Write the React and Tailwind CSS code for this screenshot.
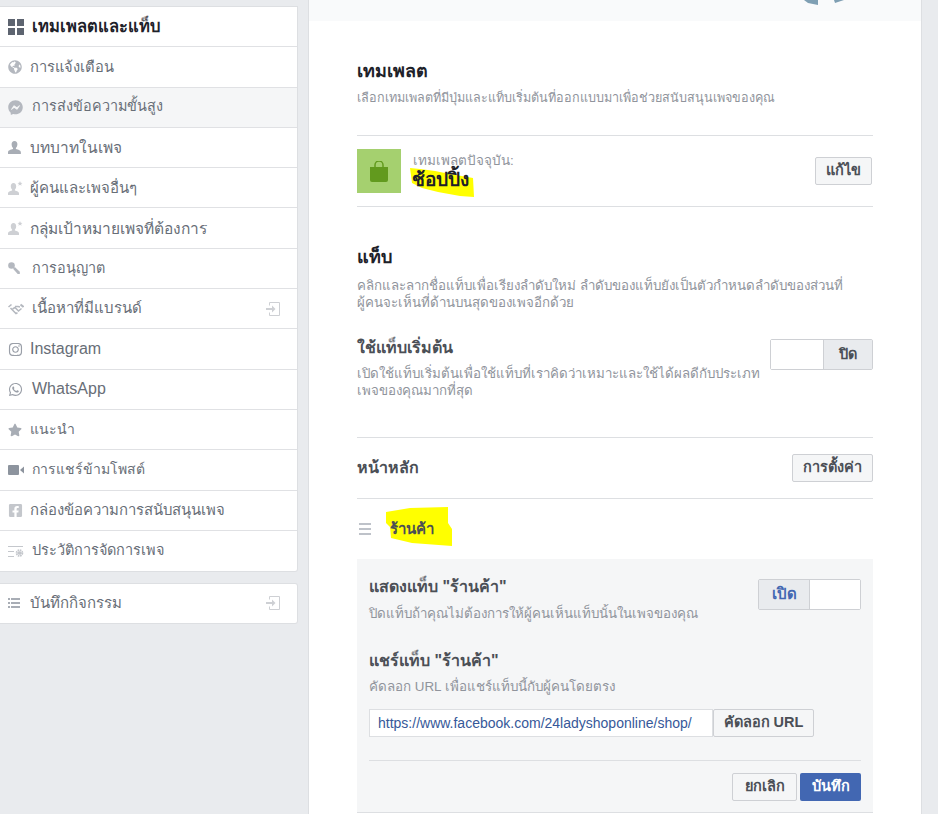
import React from "react";
import { FaFacebookMessenger, FaInstagram, FaWhatsapp, FaStar, FaFacebookSquare, FaGlobeAmericas } from "react-icons/fa";

const FONT = "font-['Liberation_Sans','Noto_Sans','Tahoma',sans-serif]";

const Grid = () => (
  <svg width="16" height="16" viewBox="0 0 16 16" fill="#5d6470"><rect width="7" height="7" /><rect x="9" width="7" height="7" /><rect y="9" width="7" height="7" /><rect x="9" y="9" width="7" height="7" /></svg>
);
const Bust = () => (
  <svg width="13" height="13" viewBox="0 0 13 13" fill="#a8adb5"><path d="M6.500 0c1.900 0 2.900 1.400 2.900 3.300 0 1.500-.7 3-1.500 3.800v1c2.300.7 5 1.300 5 3.400V13H0v-1.500c0-2.100 2.700-2.700 5-3.400v-1C4.200 6.300 3.600 4.800 3.600 3.300 3.600 1.400 4.600 0 6.500 0z" /></svg>
);
const UserStar = () => (
  <svg width="15" height="14" viewBox="0 0 15 14" fill="#ced0d4"><path d="M5.500 2c1.800 0 2.700 1.300 2.700 3.200 0 1.400-.6 2.600-1.300 3.200v1c2 .5 4.100 1.100 4.100 2.900V14H0v-1.700c0-1.800 2.100-2.400 4.100-2.900v-1C3.400 7.800 2.800 6.600 2.800 5.200 2.800 3.300 3.700 2 5.500 2z" /><path d="M12 0l.7 1.800 1.800.1-1.400 1.100.5 1.800-1.600-1-1.600 1 .5-1.800-1.400-1.100 1.800-.1z" /></svg>
);
const Key = () => (
  <svg width="12" height="12" viewBox="0 0 12 12" fill="#b4b8bf"><circle cx="3.500" cy="3.500" r="3.300" /><path d="M5 6.800L6.800 5l5 4.800V12H9.700z" /></svg>
);
const Shake = () => (
  <svg width="16" height="12" viewBox="0 0 16 12" fill="none" stroke="#b4b8bf" strokeWidth="1.500"><path d="M0.500 4L3.500 1.500" /><path d="M15.500 4L12.500 1.500" strokeWidth="2" /><path d="M2.500 5L8 10.500l1.500-.7" /><path d="M13.500 5.500L10.500 8 7 4.500l-2.500 1.500" /><path d="M7 3.500h3l2 .5" /></svg>
);
const GearList = () => (
  <svg width="16" height="13" viewBox="0 0 16 13" fill="none"><path d="M0 1.500h15M0 6.500h6M0 11.500h6" stroke="#c4c7cc" /><circle cx="11.500" cy="8" r="2.800" fill="none" stroke="#c4c7cc" strokeWidth="2" strokeDasharray="1.500 .7" /><circle cx="11.500" cy="8" r="1.800" fill="#c4c7cc" /></svg>
);
const ListIcon = () => (
  <svg width="12" height="10" viewBox="0 0 12 10" fill="#a8adb5"><rect width="2" height="2" /><rect y="4" width="2" height="2" /><rect y="8" width="2" height="2" /><rect x="3" width="9" height="2" /><rect x="3" y="4" width="9" height="2" /><rect x="3" y="8" width="9" height="2" /></svg>
);
const Enter = () => (
  <svg width="14" height="14" viewBox="0 0 14 14" fill="none" stroke="#ced0d4"><path d="M3.500 3.500V.5h10v13h-10v-3" /><path d="M0 7h7.500" strokeWidth="2" /><path d="M6 3.500L9.500 7 6 10.500z" fill="#ced0d4" stroke="none" /></svg>
);
const Video = () => (
  <svg width="16" height="10" viewBox="0 0 16 10" fill="#8d949e"><rect width="11" height="10" rx="1" /><path d="M12 5l4-3.500v7z" /></svg>
);
const Bag = () => (
  <svg width="18" height="21" viewBox="0 0 18 21"><path d="M5 7V4a4 4 0 0 1 8 0v3" fill="none" stroke="#629a1e" strokeWidth="1.500" /><path d="M0 6h18v13a2 2 0 0 1-2 2H2a2 2 0 0 1-2-2z" fill="#629a1e" /></svg>
);

const items = [
  { t: "เทมเพลตและแท็บ", i: <Grid />, x: "w-[32px]", s: "text-[16.5px]", active: true },
  { t: "การแจ้งเตือน", i: <FaGlobeAmericas size={14} color="#b4b8bf" />, x: "w-[30px]", s: "text-[14.7px]" },
  { t: "การส่งข้อความขั้นสูง", i: <FaFacebookMessenger size={15} color="#b4b8bf" />, x: "w-[32px]", s: "text-[14.4px]", hover: true },
  { t: "บทบาทในเพจ", i: <Bust />, x: "w-[30px]", s: "text-[15.5px]" },
  { t: "ผู้คนและเพจอื่นๆ", i: <UserStar />, x: "w-[30px]", s: "text-[15px]" },
  { t: "กลุ่มเป้าหมายเพจที่ต้องการ", i: <UserStar />, x: "w-[30px]", s: "text-[15.5px]" },
  { t: "การอนุญาต", i: <Key />, x: "w-[32px]", s: "text-[14.4px]" },
  { t: "เนื้อหาที่มีแบรนด์", i: <Shake />, x: "w-[32px]", s: "text-[15px]", enter: true },
  { t: "Instagram", i: <FaInstagram size={15} color="#9a9fa8" />, x: "w-[30px]", s: "text-[16px]" },
  { t: "WhatsApp", i: <FaWhatsapp size={15} color="#9a9fa8" />, x: "w-[32px]", s: "text-[16px]" },
  { t: "แนะนำ", i: <FaStar size={14} color="#a8adb5" />, x: "w-[30px]", s: "text-[14px]" },
  { t: "การแชร์ข้ามโพสต์", i: <Video />, x: "w-[32px]", s: "text-[14px]" },
  { t: "กล่องข้อความการสนับสนุนเพจ", i: <FaFacebookSquare size={15} color="#c4c7cc" />, x: "w-[30px]", s: "text-[14.9px]" },
  { t: "ประวัติการจัดการเพจ", i: <GearList />, x: "w-[32px]", s: "text-[14.5px]" },
];

function Row({ it, last, h = "h-[40.3px]" }) {
  return (
    <div className={`flex items-center ${h} pr-[17px] ${last ? "" : "border-b border-[#e0e1e4]"} ${it.hover ? "bg-[#f5f6f7]" : ""}`}>
      <div className={`${it.x} shrink-0 pl-2 flex items-center`}>{it.i}</div>
      <span className={`flex-1 ${it.s} ${it.active ? "font-bold text-[#1d2129]" : "text-[#686e77]"}`}>{it.t}</span>
      {it.enter && <Enter />}
    </div>
  );
}

function Btn({ children, className = "" }) {
  return <div className={`flex items-center justify-center h-[28px] bg-[#f5f6f7] border border-[#ced0d4] rounded-[2px] text-[14.5px] font-bold text-[#4b4f56] ${className}`}>{children}</div>;
}

export default function App() {
  return (
    <div className={`${FONT} w-[938px] h-[814px] bg-[#e9ebee] overflow-hidden flex`}>
      <aside className="w-[298px] shrink-0 pt-[6px]">
        <div className="bg-white border-r border-t border-b border-[#dddfe2] rounded-br-[3px]">
          {items.map((it, i) => <Row key={it.t} it={it} last={i === items.length - 1} />)}
        </div>
        <div className="mt-[11px] bg-white border-r border-t border-b border-[#dddfe2] rounded-r-[3px]">
          <Row it={{ t: "บันทึกกิจกรรม", i: <ListIcon />, x: "w-[30px]", s: "text-[15px]", enter: true }} last h="h-[38.5px]" />
        </div>
      </aside>

      <main className="ml-[10px] w-[614px] h-[814px] bg-white border-x border-[#dddfe2] shrink-0">
        <div className="h-[21px] bg-[#f9fafb] flex justify-end pr-[72px]">
          <svg width="46" height="6" viewBox="0 0 46 6" fill="#7f9fb3"><path d="M1 0h14v5L5 3z" /><path d="M31 0h10l-9 3z" /></svg>
        </div>
        <div className="px-[48px]">
          <div className="h-[115px] pt-[38px] border-b border-[#dddfe2]">
            <h2 className="text-[18px] leading-[24px] font-bold text-[#1d2129]">เทมเพลต</h2>
            <p className="mt-[7px] text-[12.6px] leading-[16px] text-[#90949c] whitespace-nowrap">เลือกเทมเพลตที่มีปุ่มและแท็บเริ่มต้นที่ออกแบบมาเพื่อช่วยสนับสนุนเพจของคุณ</p>
          </div>
          <div className="h-[71px] border-b border-[#dddfe2] flex items-center">
            <div className="w-[44px] h-[44px] bg-[#a5d06f] flex items-center justify-center shrink-0"><Bag /></div>
            <div className="ml-[12px] flex-1">
              <p className="text-[13.5px] leading-[15px] text-[#90949c]">เทมเพลตปัจจุบัน:</p>
              <div className="relative mt-[2px] -ml-px">
                <svg className="absolute left-[-2px] top-[-2px]" width="64" height="29" viewBox="0 0 64 29" fill="#ffff00"><path d="M0 0L10 1 25 3 40 6 63 10 64 29 50 28 28 24 12 20 2 15z" /></svg>
                <p className="relative text-[19px] leading-[20px] font-bold text-[#1d2129]">ช้อปปิ้ง</p>
              </div>
            </div>
            <Btn className="w-[57px] mr-[1px]">แก้ไข</Btn>
          </div>

          <div className="pt-[38px]">
            <h2 className="text-[18px] leading-[24px] font-bold text-[#1d2129]">แท็บ</h2>
            <p className="mt-[8px] text-[13.3px] leading-[17px] text-[#90949c] whitespace-nowrap">คลิกและลากชื่อแท็บเพื่อเรียงลำดับใหม่ ลำดับของแท็บยังเป็นตัวกำหนดลำดับของส่วนที่<br />ผู้คนจะเห็นที่ด้านบนสุดของเพจอีกด้วย</p>
          </div>
          <div className="mt-[28px] h-[99px] border-b border-[#dddfe2] flex justify-between">
            <div className="w-[408px]">
              <h3 className="text-[16px] leading-[18px] font-bold text-[#4b4f56]">ใช้แท็บเริ่มต้น</h3>
              <p className="mt-[8px] text-[13.3px] leading-[17px] text-[#90949c] whitespace-nowrap">เปิดใช้แท็บเริ่มต้นเพื่อใช้แท็บที่เราคิดว่าเหมาะและใช้ได้ผลดีกับประเภท<br />เพจของคุณมากที่สุด</p>
            </div>
            <div className="w-[103px] h-[31px] flex border border-[#ced0d4] rounded-[2px]">
              <div className="flex-1 bg-white" />
              <div className="w-[49px] border-l border-[#ced0d4] bg-[#e9ebee] flex items-center justify-center text-[14.5px] font-bold text-[#4b4f56]">ปิด</div>
            </div>
          </div>
          <div className="h-[61px] border-b border-[#dddfe2] flex items-center justify-between">
            <span className="text-[16px] font-bold text-[#4b4f56]">หน้าหลัก</span>
            <Btn className="w-[81px]">การตั้งค่า</Btn>
          </div>
          <div className="h-[60px] flex items-center">
            <svg width="12" height="12" viewBox="0 0 12 12" fill="#bec2c9" className="ml-[2px]"><rect width="12" height="2" /><rect y="5" width="12" height="2" /><rect y="10" width="12" height="2" /></svg>
            <div className="relative ml-[19px] leading-[20px]">
              <svg className="absolute left-[-4px] top-[-12px]" width="66" height="39" viewBox="0 0 66 39" fill="#ffff00"><path d="M0 5L24 1 62 0 62 16 66 22 66 39 26 36 5 31 4 20 0 16z" /></svg>
              <span className="relative text-[15px] font-bold text-[#4b4f56]">ร้านค้า</span>
            </div>
          </div>
          <div className="bg-[#f5f6f7] h-[254px] border-b border-[#dddfe2] px-[12px]">
            <div className="flex justify-between pt-[19px] h-[74px]">
              <div>
                <h3 className="text-[16px] leading-[18px] font-bold text-[#4b4f56]">แสดงแท็บ "ร้านค้า"</h3>
                <p className="mt-[10px] text-[13.3px] leading-[16px] text-[#90949c]">ปิดแท็บถ้าคุณไม่ต้องการให้ผู้คนเห็นแท็บนั้นในเพจของคุณ</p>
              </div>
              <div className="w-[103px] h-[31px] mt-px flex border border-[#ced0d4] rounded-[2px]">
                <div className="w-[51px] border-r border-[#ced0d4] bg-[#e9ebee] flex items-center justify-center text-[15px] font-bold text-[#4267b2]">เปิด</div>
                <div className="flex-1 bg-white" />
              </div>
            </div>
            <h3 className="mt-[19px] text-[16px] leading-[18px] font-bold text-[#4b4f56]">แชร์แท็บ "ร้านค้า"</h3>
            <p className="mt-[9px] text-[13.4px] leading-[16px] text-[#90949c]">คัดลอก URL เพื่อแชร์แท็บนี้กับผู้คนโดยตรง</p>
            <div className="mt-[14px] flex">
              <div className="w-[344px] h-[28px] bg-white border border-[#dddfe2] pl-[8px] flex items-center text-[14px] text-[#365899]">https://www.facebook.com/24ladyshoponline/shop/</div>
              <Btn className="w-[101px]">คัดลอก URL</Btn>
            </div>
            <div className="mt-[23px] pt-[12px] border-t border-[#dddfe2] flex justify-end gap-[3px]">
              <Btn className="w-[65px]">ยกเลิก</Btn>
              <div className="w-[61px] h-[28px] bg-[#4267b2] rounded-[2px] flex items-center justify-center text-[14.5px] font-bold text-white">บันทึก</div>
            </div>
          </div>
        </div>
      </main>
    </div>
  );
}
